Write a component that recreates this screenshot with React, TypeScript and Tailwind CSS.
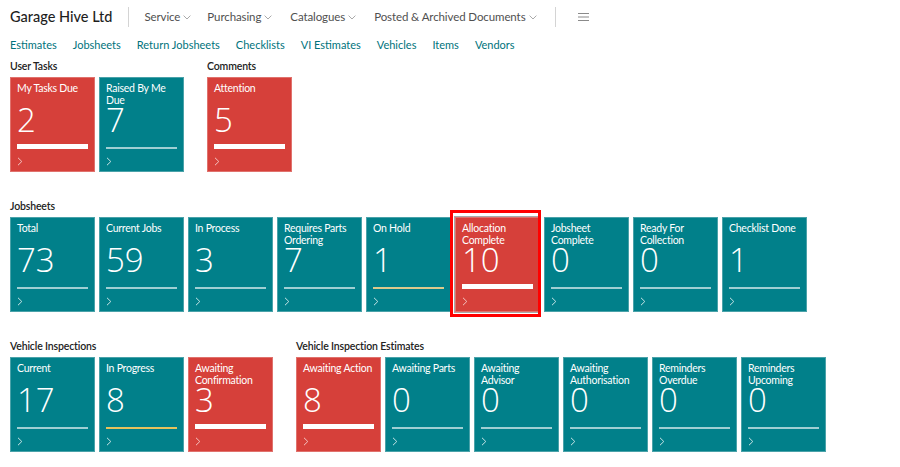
import React from "react";

type Tone = "teal" | "red";
type Bar = "thin" | "thick" | "hold" | "progress";

interface TileData {
    title: string;
    value: number;
    tone: Tone;
    bar: Bar;
    focused?: boolean;
}

const menu = ["Service", "Purchasing", "Catalogues", "Posted & Archived Documents"];
const links = ["Estimates", "Jobsheets", "Return Jobsheets", "Checklists", "VI Estimates", "Vehicles", "Items", "Vendors"];

const userTasks: TileData[] = [
    { title: "My Tasks Due", value: 2, tone: "red", bar: "thick" },
    { title: "Raised By Me Due", value: 7, tone: "teal", bar: "thin" },
];
const comments: TileData[] = [{ title: "Attention", value: 5, tone: "red", bar: "thick" }];
const jobsheets: TileData[] = [
    { title: "Total", value: 73, tone: "teal", bar: "thin" },
    { title: "Current Jobs", value: 59, tone: "teal", bar: "thin" },
    { title: "In Process", value: 3, tone: "teal", bar: "thin" },
    { title: "Requires Parts Ordering", value: 7, tone: "teal", bar: "thin" },
    { title: "On Hold", value: 1, tone: "teal", bar: "hold" },
    { title: "Allocation Complete", value: 10, tone: "red", bar: "thick", focused: true },
    { title: "Jobsheet Complete", value: 0, tone: "teal", bar: "thin" },
    { title: "Ready For Collection", value: 0, tone: "teal", bar: "thin" },
    { title: "Checklist Done", value: 1, tone: "teal", bar: "thin" },
];
const inspections: TileData[] = [
    { title: "Current", value: 17, tone: "teal", bar: "thin" },
    { title: "In Progress", value: 8, tone: "teal", bar: "progress" },
    { title: "Awaiting Confirmation", value: 3, tone: "red", bar: "thick" },
];
const estimates: TileData[] = [
    { title: "Awaiting Action", value: 8, tone: "red", bar: "thick" },
    { title: "Awaiting Parts", value: 0, tone: "teal", bar: "thin" },
    { title: "Awaiting Advisor", value: 0, tone: "teal", bar: "thin" },
    { title: "Awaiting Authorisation", value: 0, tone: "teal", bar: "thin" },
    { title: "Reminders Overdue", value: 0, tone: "teal", bar: "thin" },
    { title: "Reminders Upcoming", value: 0, tone: "teal", bar: "thin" },
];

const barClass: Record<Bar, string> = {
    thin: "h-[2px] bg-[#9fcfd3]",
    thick: "h-[5px] bg-white",
    hold: "h-[2px] bg-[#dcc98c]",
    progress: "h-[2px] bg-[#e6c25c]",
};

function Chevron({ className = "" }: { className?: string }) {
    return (
        <svg width="6" height="9" viewBox="0 0 6 9" className={className}>
            <path d="M1 0.8 L4.8 4.5 L1 8.2" fill="none" stroke="currentColor" strokeWidth="1" />
        </svg>
    );
}

function Tile({ tile }: { tile: TileData }) {
    const bg = tile.tone === "red"
        ? "bg-[#d6403a] border-[#e0726d] text-white"
        : "bg-[#01808a] border-[#4aa2a9] text-white";

    return (
        <div className="relative">
            <div className={`w-[85px] h-[95px] border px-[6px] pt-[5px] flex flex-col ${bg} ${tile.focused ? "ring-1 ring-[#a9a9a9]" : ""}`}>
                <div className="h-[23px] text-[10.5px] leading-[11.5px] tracking-[-0.25px]">{tile.title}</div>
                <div
                    className="text-[33px] leading-[28px] font-light"
                    style={{ fontFamily: "'Open Sans', Lato, sans-serif" }}
                >
                    {tile.value}
                </div>
                <div className="h-[15px] flex items-end">
                    <div className={`w-full ${barClass[tile.bar]}`} />
                </div>
                <Chevron className={`mt-[8px] ${tile.tone === "red" ? "text-[#f2c4c1]" : "text-[#c7e3e5]"}`} />
            </div>
            {tile.focused && (
                <div className="absolute -left-[5px] -right-[1px] -top-[7px] -bottom-[5px] border-[3px] border-[#ff0000] pointer-events-none" />
            )}
        </div>
    );
}

function Group({ label, tiles }: { label: string; tiles: TileData[] }) {
    return (
        <div>
            <div className="h-[16px] text-[10.5px] leading-[16px] font-semibold tracking-[-0.15px] text-[#222]">{label}</div>
            <div className="mt-[3px] flex gap-[4px]">
                {tiles.map((t) => (
                    <Tile key={t.title} tile={t} />
                ))}
            </div>
        </div>
    );
}

export default function App() {
    return (
        <div className="w-[900px] h-[467px] bg-white px-[10px] overflow-hidden" style={{ fontFamily: "Lato, 'Open Sans', sans-serif" }}>
            {/* Top bar */}
            <div className="h-[34px] flex items-center">
                <span className="text-[14.5px] font-medium text-[#1e1e1e]">Garage Hive Ltd</span>
                <div className="ml-[16px] w-px h-[20px] bg-[#d4d4d4]" />
                <div className="ml-[15px] flex items-center gap-[16px] text-[11.5px] tracking-[-0.1px] text-[#505050]">
                    {menu.map((m, i) => (
                        <span key={m} className={`flex items-center gap-[3px] ${i === 2 ? "ml-[2px]" : ""} ${i === 3 ? "ml-[2px]" : ""}`}>
                            {m}
                            <svg width="8" height="5" viewBox="0 0 8 5" className="text-[#a0a0a0]">
                                <path d="M0.6 0.6 L4 4 L7.4 0.6" fill="none" stroke="currentColor" strokeWidth="0.9" />
                            </svg>
                        </span>
                    ))}
                </div>
                <div className="ml-[18px] w-px h-[20px] bg-[#d4d4d4]" />
                <svg width="11" height="8" viewBox="0 0 11 8" className="ml-[22px] text-[#8a8a8a]">
                    <path d="M0 0.5 H11 M0 4 H11 M0 7.5 H11" stroke="currentColor" strokeWidth="1" />
                </svg>
            </div>

            {/* Quick links */}
            <div className="h-[22px] flex items-center gap-[16px] text-[11px] text-[#00737c]">
                {links.map((l) => (
                    <span key={l}>{l}</span>
                ))}
            </div>

            <div className="mt-[2px] flex gap-[23px]">
                <Group label="User Tasks" tiles={userTasks} />
                <Group label="Comments" tiles={comments} />
            </div>

            <div className="mt-[26px] flex">
                <Group label="Jobsheets" tiles={jobsheets} />
            </div>

            <div className="mt-[26px] flex gap-[23px]">
                <Group label="Vehicle Inspections" tiles={inspections} />
                <Group label="Vehicle Inspection Estimates" tiles={estimates} />
            </div>
        </div>
    );
}
